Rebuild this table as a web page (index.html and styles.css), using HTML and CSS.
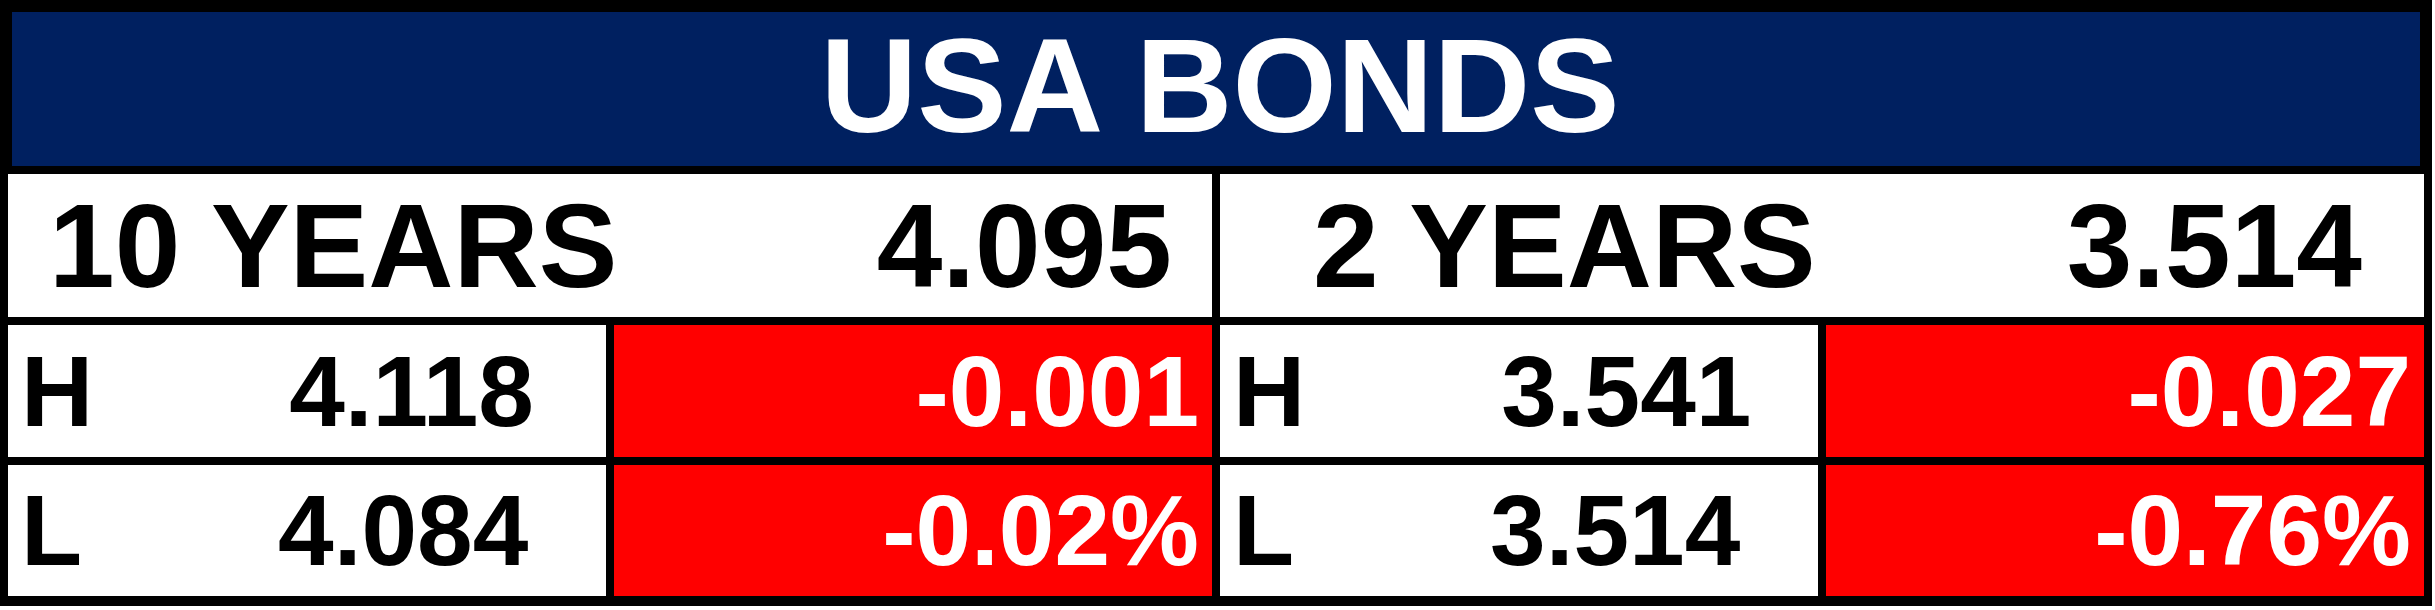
FILE: index.html
```html
<!DOCTYPE html>
<html lang="en">

<head>
    <meta charset="UTF-8">
    <meta name="viewport" content="width=device-width, initial-scale=1.0">
    <title>USA Bonds</title>
    <link rel="stylesheet" href="styles.css">
</head>

<body>
    <div class="board">
        <div class="title">USA BONDS</div>

        <div class="year year-left">
            <span>10 YEARS</span>
            <span>4.095</span>
        </div>
        <div class="year year-right">
            <span>2 YEARS</span>
            <span>3.514</span>
        </div>

        <div class="range"><span>H</span><span>4.118</span></div>
        <div class="change">-0.001</div>
        <div class="range"><span>H</span><span>3.541</span></div>
        <div class="change">-0.027</div>

        <div class="range"><span>L</span><span>4.084</span></div>
        <div class="change">-0.02%</div>
        <div class="range"><span>L</span><span>3.514</span></div>
        <div class="change">-0.76%</div>
    </div>
</body>

</html>
```

FILE: styles.css
```css
body {
    margin: 0;
    padding: 0;
    background-color: white;
    font-family: "Liberation Sans", Arial, sans-serif;
    font-weight: bold;
}

.board {
    width: 2432px;
    box-sizing: border-box;
    background-color: black;
    padding: 8px 8px 10px 8px;
    display: grid;
    grid-template-columns: repeat(4, 598px);
    grid-template-rows: 158px 143px 132px 131px;
    gap: 8px;
}

.title {
    grid-column: 1 / -1;
    margin: 4px 4px 0 4px;
    background-color: #002060;
    color: white;
    font-size: 134px;
    display: flex;
    align-items: center;
    justify-content: center;
    padding-bottom: 8px;
    padding-left: 8px;
}

.year {
    grid-column: span 2;
    background-color: white;
    color: black;
    font-size: 118px;
    display: flex;
    align-items: center;
    justify-content: space-between;
}

.year-left {
    padding: 0 40px 0 41px;
}

.year-right {
    padding: 0 62px 0 93px;
}

.range {
    background-color: white;
    color: black;
    font-size: 100px;
    display: flex;
    align-items: center;
    gap: 196px;
    padding-left: 13px;
}

.change {
    background-color: #ff0000;
    color: white;
    font-size: 100px;
    display: flex;
    align-items: center;
    justify-content: flex-end;
    padding-right: 13px;
}
```
